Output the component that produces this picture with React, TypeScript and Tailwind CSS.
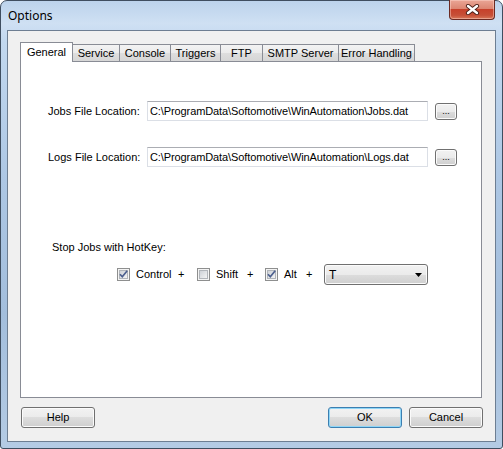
import type { ReactNode } from 'react';

const tabs = [
  { label: 'General', w: 'w-[53px]' },
  { label: 'Service', w: 'w-[47px]' },
  { label: 'Console', w: 'w-[51px]' },
  { label: 'Triggers', w: 'w-[50px]' },
  { label: 'FTP', w: 'w-[42px]' },
  { label: 'SMTP Server', w: 'w-[76px]' },
  { label: 'Error Handling', w: 'w-[77px]' },
];

function CloseButton() {
  return (
    <div className="-mt-px mr-px flex h-[20px] w-[46px] items-center justify-center rounded-b-[4px] border border-t-0 border-[#6b2a22] bg-[linear-gradient(180deg,#eaa696_0%,#dc8672_45%,#c7412b_50%,#c64f37_80%,#d8785a_100%)] shadow-[inset_0_0_0_1px_rgba(255,220,210,0.45)]">
      <svg width="15" height="11" viewBox="0 0 15 11">
        <path d="M3 2 L12 9 M12 2 L3 9" stroke="#4a1f18" strokeWidth="4.2" strokeLinecap="round" />
        <path d="M3 2 L12 9 M12 2 L3 9" stroke="#ffffff" strokeWidth="2.4" strokeLinecap="round" />
      </svg>
    </div>
  );
}

function CheckBox({ checked }: { checked: boolean }) {
  return (
    <svg width="13" height="13" viewBox="0 0 13 13" className="shrink-0">
      <defs>
        <linearGradient id="cbfill" x1="0" y1="0" x2="1" y2="1">
          <stop offset="0" stopColor="#cbcfd5" />
          <stop offset="1" stopColor="#f6f6f6" />
        </linearGradient>
      </defs>
      <rect x="0.5" y="0.5" width="12" height="12" fill="#f4f4f4" stroke="#8e8f8f" />
      <rect x="2.5" y="2.5" width="8" height="8" fill="url(#cbfill)" stroke="#b1b5ba" />
      {checked && (
        <path d="M3 6.2 L5.3 8.8 L10.2 2.8" stroke="#4c5f8e" strokeWidth="1.7" fill="none" />
      )}
    </svg>
  );
}

function Button({ children, primary }: { children: ReactNode; primary?: boolean }) {
  return (
    <div
      className={
        primary
          ? 'flex h-[21px] w-[74px] items-center justify-center rounded-[3px] border border-[#3c7fb1] bg-[linear-gradient(180deg,#f2f2f2_0%,#ebebeb_50%,#dddddd_50%,#cfcfcf_100%)] shadow-[inset_0_0_0_1px_#8fd6f7]'
          : 'flex h-[21px] w-[74px] items-center justify-center rounded-[3px] border border-[#707070] bg-[linear-gradient(180deg,#f2f2f2_0%,#ebebeb_50%,#dddddd_50%,#cfcfcf_100%)] shadow-[inset_0_0_0_1px_#fbfbfb]'
      }
    >
      {children}
    </div>
  );
}

function PathRow({ label, value }: { label: string; value: string }) {
  return (
    <div className="flex items-center">
      <span className="w-[99px] shrink-0">{label}</span>
      <div className="flex h-[20px] w-[281px] items-center border border-[#dbdfe6] border-t-[#abadb3] bg-white pl-[2px] tracking-[-0.1px]">
        {value}
      </div>
      <div className="ml-[7px] flex h-[17px] w-[22px] items-end justify-center rounded-[3px] border border-[#707070] bg-[linear-gradient(180deg,#f2f2f2_0%,#ebebeb_50%,#dddddd_50%,#cfcfcf_100%)] pb-[3px] text-[9px] leading-[9px] shadow-[inset_0_0_0_1px_#fbfbfb]">
        ...
      </div>
    </div>
  );
}

export default function App() {
  return (
    <div className="h-[449px] w-[503px] overflow-hidden bg-white">
      <div
        className="flex h-full w-full flex-col rounded-t-[7px] rounded-b-[3px] border border-[#3f4e60] bg-[linear-gradient(180deg,#bcd3ec_0%,#cfe0f3_5%,#c2d8ef_9%,#adc7e4_40%,#a3bedc_70%,#b4cbe4_100%)] px-[6px] pb-[6px] text-[11px] text-black"
        style={{ fontFamily: '"Liberation Sans", Arial, sans-serif' }}
      >
        {/* caption */}
        <div className="flex h-[29px] shrink-0">
          <span className="pl-px pt-[7px] font-['Noto_Sans',sans-serif] text-[12px] leading-[16px]">
            Options
          </span>
          <div className="ml-auto">
            <CloseButton />
          </div>
        </div>

        {/* client area */}
        <div className="flex flex-1 flex-col border border-[#6d7e92] bg-[#f0f0f0] pb-[13px] pl-[12px] pr-[13px] pt-[11px]">
          <div className="flex h-[19px] shrink-0 items-end">
            {tabs.map((t, i) =>
              i === 0 ? (
                <div
                  key={t.label}
                  className={`relative z-10 -mb-px flex h-[20px] items-center justify-center border border-b-0 border-[#898c95] bg-white pb-[1px] ${t.w}`}
                >
                  {t.label}
                </div>
              ) : (
                <div
                  key={t.label}
                  className={`flex h-[17px] items-center justify-center border-l border-t border-[#898c95] bg-[linear-gradient(180deg,#f3f3f3_0%,#ebebeb_50%,#dedede_50%,#d6d6d6_100%)] ${i === 1 ? '-ml-px' : ''} ${i === tabs.length - 1 ? 'border-r' : ''} ${t.w}`}
                >
                  {t.label}
                </div>
              ),
            )}
          </div>

          {/* General page */}
          <div className="flex flex-1 flex-col border border-[#898c95] bg-white pl-[27px] pt-[39px]">
            <PathRow label="Jobs File Location:" value="C:\ProgramData\Softomotive\WinAutomation\Jobs.dat" />
            <div className="mt-[26px]">
              <PathRow label="Logs File Location:" value="C:\ProgramData\Softomotive\WinAutomation\Logs.dat" />
            </div>

            <span className="ml-[4px] mt-[73px] leading-[14px]">Stop Jobs with HotKey:</span>

            <div className="ml-[69px] mt-[10px] flex h-[21px] items-center">
              <div className="flex w-[61px] items-center gap-[6px]">
                <CheckBox checked />
                <span>Control</span>
              </div>
              <span className="w-[19px]">+</span>
              <div className="flex w-[50px] items-center gap-[6px]">
                <CheckBox checked={false} />
                <span>Shift</span>
              </div>
              <span className="w-[18px]">+</span>
              <div className="flex w-[41px] items-center gap-[6px]">
                <CheckBox checked />
                <span>Alt</span>
              </div>
              <span className="w-[18px]">+</span>
              <div className="flex h-[21px] w-[104px] items-center rounded-[3px] border border-[#707070] bg-[linear-gradient(180deg,#f2f2f2_0%,#ebebeb_50%,#dddddd_50%,#cfcfcf_100%)] pl-[4px] pr-[5px] text-[12px] shadow-[inset_0_0_0_1px_#fbfbfb]">
                <span>T</span>
                <svg width="7" height="4" viewBox="0 0 7 4" className="ml-auto">
                  <path d="M0 0 H7 L3.5 4 Z" fill="#000" />
                </svg>
              </div>
            </div>
          </div>

          <div className="mt-[9px] -mr-px ml-px flex h-[21px] shrink-0 items-center">
            <Button>Help</Button>
            <div className="ml-auto flex gap-[7px]">
              <Button primary>OK</Button>
              <Button>Cancel</Button>
            </div>
          </div>
        </div>
      </div>
    </div>
  );
}
